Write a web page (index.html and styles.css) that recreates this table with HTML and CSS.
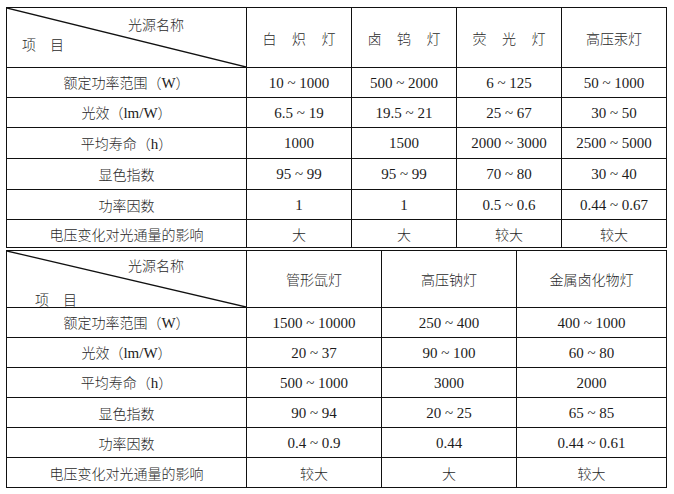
FILE: index.html
```html
<!DOCTYPE html>
<html lang="zh">
<head>
<meta charset="utf-8">
<title>光源比较</title>
<link rel="stylesheet" href="styles.css">
</head>
<body>
<div class="page">
  <table class="tbl tbl-top">
    <colgroup><col class="c-label"><col class="c4"><col class="c4"><col class="c4"><col class="c4"></colgroup>
    <tr class="head">
      <th class="corner">
        <svg class="diag" viewBox="0 0 100 100" preserveAspectRatio="none"><line x1="0" y1="0" x2="100" y2="100" stroke="#111" stroke-width="1.3" vector-effect="non-scaling-stroke"/></svg>
        <div class="corner-a">光源名称</div>
        <div class="corner-b">项　目</div>
      </th>
      <th><span class="sp">白炽灯</span></th>
      <th><span class="sp">卤钨灯</span></th>
      <th><span class="sp">荧光灯</span></th>
      <th>高压汞灯</th>
    </tr>
    <tr class="r30"><td class="lbl">额定功率范围（<span class="num">W</span>）</td><td class="num">10 ~ 1000</td><td class="num">500 ~ 2000</td><td class="num">6 ~ 125</td><td class="num">50 ~ 1000</td></tr>
    <tr class="r30"><td class="lbl">光效（<span class="num">lm/W</span>）</td><td class="num">6.5 ~ 19</td><td class="num">19.5 ~ 21</td><td class="num">25 ~ 67</td><td class="num">30 ~ 50</td></tr>
    <tr class="r31"><td class="lbl">平均寿命（<span class="num">h</span>）</td><td class="num">1000</td><td class="num">1500</td><td class="num">2000 ~ 3000</td><td class="num">2500 ~ 5000</td></tr>
    <tr class="r31"><td class="lbl">显色指数</td><td class="num">95 ~ 99</td><td class="num">95 ~ 99</td><td class="num">70 ~ 80</td><td class="num">30 ~ 40</td></tr>
    <tr class="r30"><td class="lbl">功率因数</td><td class="num">1</td><td class="num">1</td><td class="num">0.5 ~ 0.6</td><td class="num">0.44 ~ 0.67</td></tr>
    <tr class="r28"><td class="lbl">电压变化对光通量的影响</td><td>大</td><td>大</td><td>较大</td><td>较大</td></tr>
  </table>

  <table class="tbl tbl-bottom">
    <colgroup><col class="c-label"><col class="c3a"><col class="c3a"><col class="c3b"></colgroup>
    <tr class="head2">
      <th class="corner">
        <svg class="diag" viewBox="0 0 100 100" preserveAspectRatio="none"><line x1="0" y1="0" x2="100" y2="100" stroke="#111" stroke-width="1.3" vector-effect="non-scaling-stroke"/></svg>
        <div class="corner-a corner-a2">光源名称</div>
        <div class="corner-b corner-b2">项　目</div>
      </th>
      <th>管形氙灯</th>
      <th>高压钠灯</th>
      <th>金属卤化物灯</th>
    </tr>
    <tr class="r30"><td class="lbl">额定功率范围（<span class="num">W</span>）</td><td class="num">1500 ~ 10000</td><td class="num">250 ~ 400</td><td class="num">400 ~ 1000</td></tr>
    <tr class="r30"><td class="lbl">光效（<span class="num">lm/W</span>）</td><td class="num">20 ~ 37</td><td class="num">90 ~ 100</td><td class="num">60 ~ 80</td></tr>
    <tr class="r30"><td class="lbl">平均寿命（<span class="num">h</span>）</td><td class="num">500 ~ 1000</td><td class="num">3000</td><td class="num">2000</td></tr>
    <tr class="r30"><td class="lbl">显色指数</td><td class="num">90 ~ 94</td><td class="num">20 ~ 25</td><td class="num">65 ~ 85</td></tr>
    <tr class="r30"><td class="lbl">功率因数</td><td class="num">0.4 ~ 0.9</td><td class="num">0.44</td><td class="num">0.44 ~ 0.61</td></tr>
    <tr class="r30"><td class="lbl">电压变化对光通量的影响</td><td>较大</td><td>大</td><td>较大</td></tr>
  </table>
</div>
</body>
</html>
```

FILE: styles.css
```css
html, body {
  margin: 0;
  padding: 0;
  background: #ffffff;
}

.page {
  padding: 7px 0 0 6px;
  color: #2a2a2a;
  font-family: "Noto Sans CJK SC", "Liberation Serif", sans-serif;
  font-size: 14px;
  font-weight: 300;
}

.tbl {
  border-collapse: collapse;
  table-layout: fixed;
  width: 661px;
}

.tbl-bottom {
  margin-top: 2px;
}

.tbl th,
.tbl td {
  border: 1px solid #111;
  padding: 0;
  text-align: center;
  vertical-align: middle;
  font-weight: 300;
  line-height: 20px;
  white-space: nowrap;
}

.c-label { width: 240px; }
.c4 { width: 105px; }
.c3a { width: 135px; }
.c3b { width: 150px; }

.head { height: 60px; }
.head2 { height: 57px; }
.r30 { height: 30px; }
.r31 { height: 31px; }
.r28 { height: 28px; }

.num {
  font-family: "Liberation Serif", serif;
  font-size: 15px;
  font-weight: normal;
  color: #1c1c1c;
}

.tbl td.num {
  font-weight: normal;
}

.sp {
  letter-spacing: 15.5px;
  margin-right: -15.5px;
}

.corner {
  position: relative;
  text-align: left !important;
  vertical-align: top !important;
}

.diag {
  position: absolute;
  left: 0;
  top: 0;
  width: 100%;
  height: 100%;
}

.corner-a {
  padding: 6px 0 0 121px;
}

.corner-b {
  padding-left: 15px;
}

.corner-a2 {
  padding-top: 7px;
  line-height: 14px;
}

.corner-b2 {
  margin-top: 20px;
  padding-left: 28px;
  line-height: 14px;
}
```
